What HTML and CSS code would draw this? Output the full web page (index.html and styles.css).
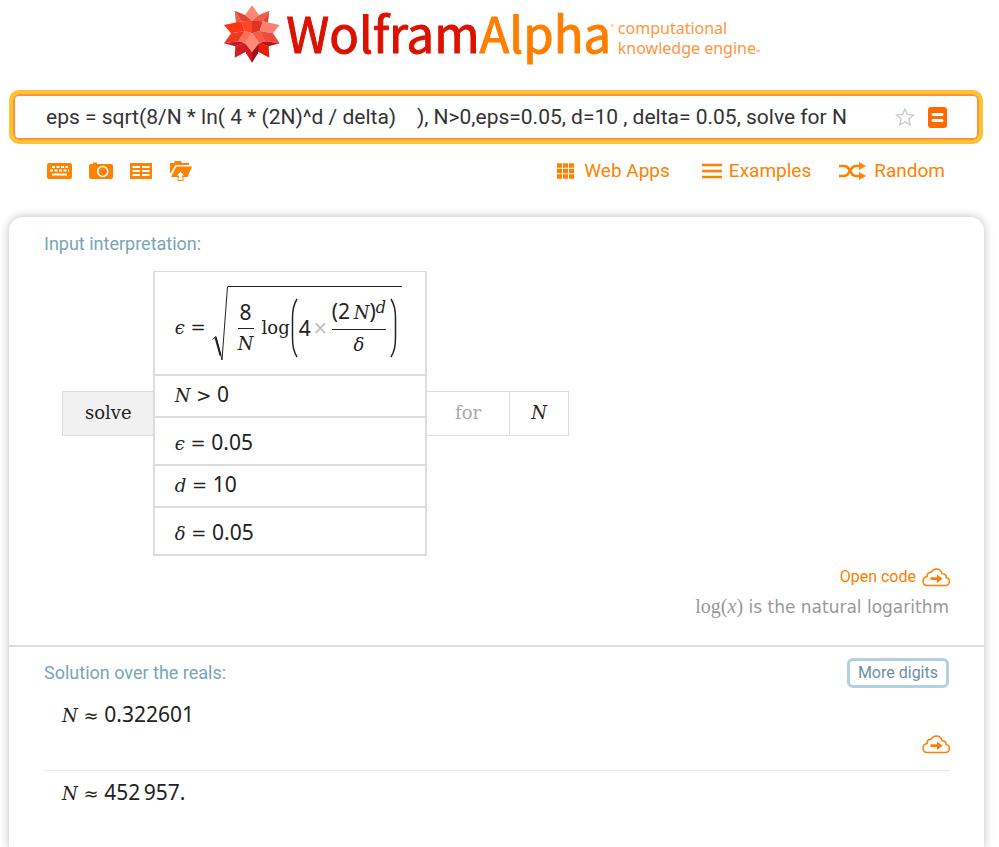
FILE: index.html
```html
<!DOCTYPE html>
<html lang="en">
<head>
<meta charset="utf-8">
<title>WolframAlpha</title>
<link rel="stylesheet" href="styles.css">
</head>
<body>
<svg class="defs" width="0" height="0" aria-hidden="true">
  <symbol id="cloud" viewBox="0 0 28 19">
    <path d="M5.500 17.500h17.500c2.500 0 4.500-1.600 4.500-4 0-2.200-1.500-3.700-3.300-4 .2-2.300-1.700-4-4-3.800C19.200 2.800 17 1 14.500 1c-2.500 0-4.300 1.200-5.400 3.200-2.400-.2-4.300 1.700-4 4.300C2.500 9 1 10.800 1 13.200c0 2.600 1.900 4.300 4.500 4.300z" fill="none" stroke="#ff7e00" stroke-width="1.500"/>
    <path d="M8.500 9.300h6.500V6.500l5.500 4.200-5.500 4.200V12H8.500z" fill="#ff7e00"/>
  </symbol>
</svg>
<header class="brand">
  <svg class="spikey" viewBox="6 6 168 172" aria-hidden="true">
    <path fill="#ff8877" d="M90 6l21 29-21 17-21-17z"/>
    <path fill="#e04535" d="M38 22l31 13 21 17-32 2z"/>
    <path fill="#ee5a48" d="M38 22l20 32-16 4z"/>
    <path fill="#f25a48" d="M142 22l-31 13-21 17 32 2z"/>
    <path fill="#e04535" d="M142 22l-20 32 16 4z"/>
    <path fill="#ff3510" d="M6 65l52-11 10 29-41 7z"/>
    <path fill="#ff8073" d="M173 65l-51-11-9 29 40 7z"/>
    <path fill="#ff4525" d="M58 54l32-2v38l-22-7z"/>
    <path fill="#e23320" d="M122 54l-32-2v38l23-7z"/>
    <path fill="#ee3a25" d="M6 120l21-30 41-7-18 31z"/>
    <path fill="#c01a24" d="M6 120l44-6 20 5-30 10z"/>
    <path fill="#f04a3a" d="M173 120l-20-30-40-7 17 31z"/>
    <path fill="#b51520" d="M173 120l-43-6-20 5 30 10z"/>
    <path fill="#d51d25" d="M38 163l2-35 30-9 6 24z"/>
    <path fill="#e81e08" d="M142 163l-2-35-30-9-6 24z"/>
    <path fill="#ff7058" d="M68 83l22 5-20 31-22-5z"/>
    <path fill="#f55a42" d="M113 83l-23 5 20 31 22-5z"/>
    <path fill="#cc1c26" d="M70 119l20 26v33l-18-28z"/>
    <path fill="#a31019" d="M110 119l-20 26v33l18-28z"/>
    <path fill="#ff8877" d="M90 88l22 30-22 28-22-28z"/>
  </svg>
  <div class="wordmark">Wolfram<span class="alpha">Alpha</span><sup class="reg">®</sup></div>
  <div class="tagline"><div>computational</div><div>knowledge engine<small>™</small></div></div>
</header>

<form class="search">
  <input class="query" type="text" aria-label="Query" value="eps = sqrt(8/N * ln( 4 * (2N)^d / delta)    ), N&gt;0,eps=0.05, d=10 , delta= 0.05, solve for N">
  <button class="icon-btn" type="button" aria-label="Favorite">
    <svg width="20" height="20" viewBox="0 0 20 20"><path d="M10 2l2.400 5.400 5.900.6-4.400 4 1.300 5.800-5.200-3-5.200 3 1.300-5.800-4.400-4 5.900-.6z" fill="none" stroke="#ccc" stroke-width="1.500"/></svg>
  </button>
  <button class="icon-btn" type="submit" aria-label="Compute">
    <svg width="19" height="21" viewBox="0 0 19 21"><rect width="19" height="21" rx="3" fill="#ff6a00"/><path d="M5 7.500h9M5 13.500h9" stroke="#fff" stroke-width="3" stroke-linecap="round"/></svg>
  </button>
</form>

<nav class="toolbar">
  <div class="tools">
    <button class="icon-btn" aria-label="Extended keyboard">
      <svg width="25" height="16" viewBox="0 0 25 16"><rect width="25" height="16" rx="2" fill="#ff8200"/><path d="M5 4h16" stroke="#fff" stroke-width="2" stroke-dasharray="3 1.500"/><path d="M3 7.500h19" stroke="#fff" stroke-width="2" stroke-dasharray="3 1.500"/><path d="M5 11.500h15" stroke="#fff" stroke-width="2"/></svg>
    </button>
    <button class="icon-btn" aria-label="Image input">
      <svg width="24" height="18" viewBox="0 0 24 18"><path d="M2 2h2V0.500h4V2h14q2 0 2 2v11q0 2-2 2H2q-2 0-2-2V4q0-2 2-2z" fill="#ff8200"/><circle cx="13.700" cy="9.500" r="5" fill="none" stroke="#fff" stroke-width="1.600"/></svg>
    </button>
    <button class="icon-btn" aria-label="Data input">
      <svg width="22" height="16" viewBox="0 0 22 16"><path fill="#ff8200" d="M0 0h22v16H0z"/><path d="M2.500 4h7.500M12 4h7.500M2.500 8h7.500M12 8h7.500M2.500 12h7.500M12 12h7.500" stroke="#fff" stroke-width="2"/></svg>
    </button>
    <button class="icon-btn" aria-label="File upload">
      <svg width="24" height="20" viewBox="0 0 24 20"><path fill="#ff8200" d="M1 13V2h4l1-2h6l1 2h7v2H6.500z"/><path fill="#ff8200" d="M7.500 5.500H23L18.500 16H2z"/><path d="M11.500 10.500l3.500 4h-2v4.500h-3v-4.500H8z" fill="#fff"/><path d="M9 16v3.500h5V16" fill="none" stroke="#ff8200" stroke-width="1"/></svg>
    </button>
  </div>
  <div class="links">
    <a href="#" class="apps"><svg width="17" height="16" viewBox="0 0 17 16"><path d="M0 2.500h17M0 8h17M0 13.500h17" stroke="#ff8200" stroke-width="4.500" stroke-dasharray="5 1"/></svg>Web Apps</a>
    <a href="#"><svg width="20" height="16" viewBox="0 0 20 16"><path d="M0 2h20M0 8h20M0 14h20" stroke="#ff8200" stroke-width="2.500"/></svg>Examples</a>
    <a href="#"><svg width="28" height="18" viewBox="0 0 28 18"><path d="M0 4h5q3 0 4.500 2.500l3 4.500q1.500 3 4.500 3h4M0 14h5q3 0 4.500-3l3-4.500Q14 4 17 4h4" fill="none" stroke="#ff8200" stroke-width="2.600"/><path fill="#ff8200" d="M20 0l7 4-7 4zM20 10l7 4-7 4z"/></svg>Random</a>
  </div>
</nav>

<main class="results">
  <section class="pod first">
    <h2>Input interpretation:</h2>
    <div class="interp">
      <div class="cell solve">solve</div>
      <div class="stack">
        <div class="row formula">
          <span class="lhs"><i>ϵ</i> =</span>
          <svg class="radical" width="16" height="76" viewBox="0 0 16 76" aria-hidden="true"><path d="M0.500 53.500l3.500-3L10 74 15.500.5" fill="none" stroke="#222" stroke-width="1"/><path d="M3.500 51.500l5 18" stroke="#222" stroke-width="2"/></svg>
          <span class="radicand">
            <span class="frac"><span class="n">8</span><i>N</i></span>
            <span class="log">log</span>
            <svg class="paren" width="7" height="60" viewBox="0 0 7 60" aria-hidden="true"><path d="M6 1Q1.500 8 1.500 20v20Q1.500 52 6 59" fill="none" stroke="#222" stroke-width="1.500"/></svg>
            <span class="n">4</span><span class="times">×</span>
            <span class="frac"><span><span class="n">(2</span>&thinsp;<i>N</i><span class="n">)</span><sup><i>d</i></sup></span><i class="den">δ</i></span>
            <svg class="paren close" width="7" height="60" viewBox="0 0 7 60" aria-hidden="true"><path d="M1 1Q5.500 8 5.500 20v20Q5.500 52 1 59" fill="none" stroke="#222" stroke-width="1.500"/></svg>
          </span>
        </div>
        <div class="row"><i>N</i> &gt; <span class="n">0</span></div>
        <div class="row tall"><i>ϵ</i> = <span class="n">0.05</span></div>
        <div class="row"><i>d</i> = <span class="n">10</span></div>
        <div class="row tall"><i>δ</i> = <span class="n">0.05</span></div>
      </div>
      <div class="cell for">for</div>
      <div class="cell var"><i>N</i></div>
    </div>
    <div class="code"><a href="#">Open code<svg width="28" height="19"><use href="#cloud"/></svg></a></div>
    <p class="note"><span class="fn">log(<i>x</i>)</span> is the natural logarithm</p>
  </section>
  <section class="pod">
    <div class="head"><h2>Solution over the reals:</h2><button class="more">More digits</button></div>
    <p class="answer"><i>N</i> ≈ <span class="n">0.322601</span></p>
    <div class="code solo"><a href="#" aria-label="Open code"><svg width="28" height="19"><use href="#cloud"/></svg></a></div>
    <hr>
    <p class="answer"><i>N</i> ≈ <span class="n">452&thinsp;957.</span></p>
  </section>
</main>
</body>
</html>
```
FILE: styles.css
```css
* { box-sizing: border-box; }
html { height: 100%; }
body {
  margin: 0;
  padding: 0 15px 0 9px;
  min-height: 100%;
  display: flex;
  flex-direction: column;
  background: #fff;
  font-family: Roboto, "Liberation Sans", sans-serif;
  color: #222;
}
.defs { position: absolute; }
svg { display: block; flex: none; }
a { color: #ff7e00; text-decoration: none; }
h2, p { margin: 0; font-weight: 400; }
.icon-btn { padding: 0; border: 0; background: none; }

.brand {
  display: flex;
  justify-content: center;
  align-items: flex-start;
  height: 90px;
  padding-right: 8px;
}
.spikey { width: 56px; height: 58px; margin: 5px 6px 0 0; }
.wordmark {
  font-family: "Noto Sans CJK JP", "Noto Sans", sans-serif;
  font-size: 49px;
  line-height: 64px;
  color: #dd1100;
  -webkit-text-stroke: 1px;
}
.alpha { color: #ff7e00; }
.reg { font-size: 6px; line-height: 0; vertical-align: 24px; color: #ff9a40; -webkit-text-stroke: 0; }
.tagline {
  margin: 18px 0 0 4px;
  font: 16px/20px "Noto Sans", sans-serif;
  color: #ff9640;
}
.tagline small { font-size: 6px; }

.search {
  display: flex;
  align-items: center;
  gap: 13px;
  height: 54px;
  margin-right: 1px;
  padding: 0 32px 0 30px;
  border: 4px solid #ffc233;
  border-radius: 10px;
  box-shadow: inset 0 0 0 2px #ff9238;
}
.query {
  flex: 1;
  min-width: 0;
  padding: 0 0 0 3px;
  border: 0;
  outline: 0;
  background: none;
  font: 21px/28px Roboto, "Liberation Sans", sans-serif;
  color: #333;
}

.toolbar {
  display: flex;
  justify-content: space-between;
  align-items: center;
  padding: 10px 39px 0 38px;
  height: 43px;
}
.tools, .links, .links a { display: flex; align-items: center; }
.tools { gap: 17px; }
.links { gap: 28px; }
.links a { gap: 7px; font-size: 19px; line-height: 28px; color: #ff8200; }
.links .apps { gap: 10px; margin-right: 4px; }

.results {
  flex: 1;
  margin-top: 30px;
  border-radius: 14px 14px 0 0;
  box-shadow: 0 0 8px 1px #c8c8c8;
}
.pod { padding: 14px 34px 28px 35px; }
.first { padding-bottom: 24px; border-bottom: 2px solid #ddd; }
h2 { font-size: 18px; line-height: 26px; color: #78a6b8; }

.interp {
  display: flex;
  align-items: center;
  margin: 14px 0 9px 18px;
  font: 18px/24px "DejaVu Serif", serif;
}
.n { font-family: "Noto Sans", sans-serif; font-size: 21px; }
.cell { padding: 9px 22px 10px; border: 1px solid #ddd; }
.solve { padding-right: 21px; border-right: 0; background: #f1f1f1; }
.for { padding: 9px 28px 10px; border-width: 1px 0; color: #aaa; }
.var { padding: 9px 21px 10px; }
.stack { border: 2px solid #ddd; border-width: 1px 2px 2px; }
.row { height: 42px; padding: 6px 20px 0; }
.row + .row { border-top: 2px solid #ddd; }
.row.tall { height: 48px; padding: 12px 20px 0; }
.row.formula { display: flex; height: 102px; padding: 14px 23px 0 20px; }
.lhs { padding: 30px 6px 0 0; }
.radicand {
  display: flex;
  align-items: center;
  height: 76px;
  padding: 6px 4px 0 10px;
  border-top: 1px solid #222;
}
.frac { display: flex; flex-direction: column; align-items: center; line-height: 30px; }
.frac > :first-child { padding-bottom: 1px; border-bottom: 1px solid #222; }
.frac > .n:first-child { padding: 0 2px 1px; }
.frac sup { font-size: 16px; line-height: 0; vertical-align: 6px; }
.log { margin-left: 8px; }
.paren { margin: 0 1px; }
.paren.close { margin-left: 4px; }
.times { margin: 0 4px 0 2px; color: #bbb; }

.code { display: flex; justify-content: flex-end; }
.code a { display: flex; align-items: center; gap: 6px; font-size: 16px; line-height: 24px; }
.note { text-align: right; padding: 4px 1px 0 0; font: 17px/27px "DejaVu Sans", sans-serif; color: #999; }
.fn { font: 20px/27px "Liberation Serif", serif; }

.head { display: flex; justify-content: space-between; align-items: center; margin-top: -3px; }
.more {
  height: 30px;
  margin-right: 1px;
  padding: 0 8px;
  border: 3px solid #b4d2de;
  border-radius: 6px;
  background: #fff;
  font: 16px/24px Roboto, "Liberation Sans", sans-serif;
  color: #6b909f;
}
.answer { padding: 12px 0 0 18px; font: 18px/28px "DejaVu Serif", serif; }
.solo { margin-top: 5px; }
hr { margin: 16px 0 -5px; border: 0; border-top: 1px solid #e4efed; }
```
